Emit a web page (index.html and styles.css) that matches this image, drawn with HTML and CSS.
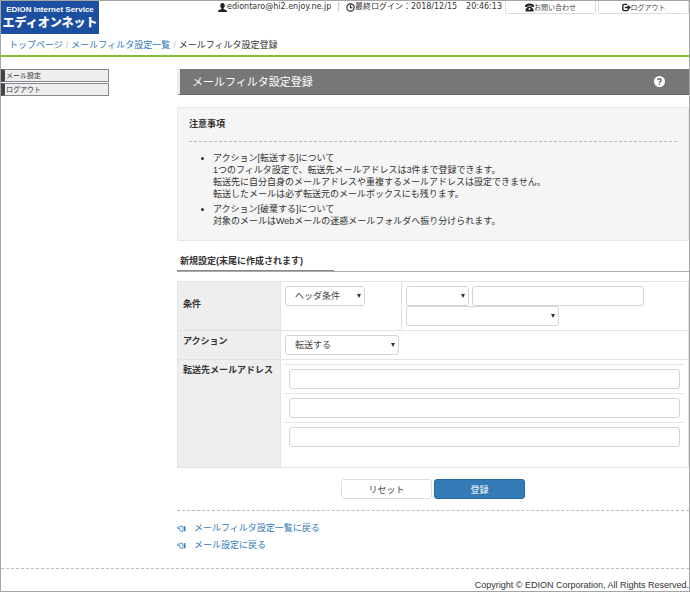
FILE: index.html
```
<!DOCTYPE html>
<html lang="ja">

<head>
    <meta charset="UTF-8">
    <meta name="viewport" content="width=device-width, initial-scale=1.0">
    <title>メールフィルタ設定登録</title>
    <link rel="stylesheet" href="styles.css">
</head>

<body>
    <header class="header">
        <a href="#" class="logo">
            <span class="logo-sub">EDION Internet Service</span>
            <span class="logo-main">エディオンネット</span>
        </a>
        <div class="user-info">
            <svg class="icon" viewBox="0 0 16 16"><path d="M8 0C5.400 0 4 1.800 4 4.500c0 2 .8 3.700 2 4.600v1.400C3.500 11.500 0 12.500 0 14v2h16v-2c0-1.500-3.500-2.500-6-3.500V9.100c1.200-.9 2-2.600 2-4.600C12 1.800 10.600 0 8 0z"/></svg>
            <span>ediontaro@hi2.enjoy.ne.jp</span>
            <span class="bar">|</span>
            <svg class="icon" viewBox="0 0 16 16"><circle cx="8" cy="8" r="6.500" fill="none" stroke="#222" stroke-width="2"/><path d="M8 3.500V8.500H11.500" fill="none" stroke="#222" stroke-width="2"/></svg>
            <span>最終ログイン：2018/12/15</span>
            <span class="time">20:46:13</span>
        </div>
        <div class="top-buttons">
            <button type="button" class="btn-top">
                <svg class="icon" viewBox="0 0 16 16"><path d="M0 5.500C0 3 3 1 8 1s8 2 8 4.500V7h-4.500V4.800h-7V7H0z"/><path d="M5 6h6l1 2 3 3v4H1v-4l3-3z"/><circle cx="8" cy="10.500" r="1.800" fill="#fff"/></svg>お問い合わせ
            </button>
            <button type="button" class="btn-top">
                <svg class="icon" viewBox="0 0 16 16"><path d="M9 2.500H3.500Q1.500 2.500 1.500 4.500v7q0 2 2 2H9q2 0 2-2" fill="none" stroke="#222" stroke-width="2.500"/><path d="M10 3l6 5-6 5v-3.500H5v-3h5z"/></svg>ログアウト
            </button>
        </div>
    </header>

    <nav class="breadcrumb">
        <a href="#">トップページ</a><span class="slash">/</span><a href="#">メールフィルタ設定一覧</a><span class="slash">/</span><span>メールフィルタ設定登録</span>
    </nav>

    <div class="container">
        <nav class="side-menu">
            <a href="#">メール設定</a>
            <a href="#">ログアウト</a>
        </nav>

        <main class="main">
            <div class="page-title">
                <h1>メールフィルタ設定登録</h1>
                <svg class="help" viewBox="0 0 16 16"><circle cx="8" cy="8" r="8" fill="#fff"/><path d="M5.500 6.300C5.500 3.200 10.500 3.200 10.500 6.200 10.500 8 8 7.800 8 9.800" fill="none" stroke="#666" stroke-width="2"/><path d="M7 11h2v2H7z" fill="#666"/></svg>
            </div>

            <section class="well">
                <h2>注意事項</h2>
                <ul>
                    <li>アクション[転送する]について<br>
                        1つのフィルタ設定で、転送先メールアドレスは3件まで登録できます。<br>
                        転送先に自分自身のメールアドレスや重複するメールアドレスは設定できません。<br>
                        転送したメールは必ず転送元のメールボックスにも残ります。</li>
                    <li>アクション[破棄する]について<br>
                        対象のメールはWebメールの迷惑メールフォルダへ振り分けられます。</li>
                </ul>
            </section>

            <h2 class="sub-title"><span>新規設定(末尾に作成されます)</span></h2>

            <form action="#" method="post">
                <table class="form-table">
                    <tr class="row-cond">
                        <th scope="row"><label for="condType">条件</label></th>
                        <td class="cond-type">
                            <span class="select w80"><select id="condType"><option>ヘッダ条件</option></select></span>
                        </td>
                        <td>
                            <div class="cond">
                                <span class="select w63"><select aria-label="ヘッダ"><option></option></select></span>
                                <input type="text" class="keyword" aria-label="キーワード">
                            </div>
                            <span class="select w153"><select aria-label="一致条件"><option></option></select></span>
                        </td>
                    </tr>
                    <tr>
                        <th scope="row"><label for="action">アクション</label></th>
                        <td colspan="2">
                            <span class="select w114"><select id="action"><option>転送する</option></select></span>
                        </td>
                    </tr>
                    <tr>
                        <th scope="row"><label for="mail1">転送先メールアドレス</label></th>
                        <td colspan="2" class="mails">
                            <div class="mail"><input type="text" id="mail1"></div>
                            <div class="mail"><input type="text" aria-label="転送先メールアドレス2"></div>
                            <div class="mail"><input type="text" aria-label="転送先メールアドレス3"></div>
                        </td>
                    </tr>
                </table>

                <div class="buttons">
                    <button type="reset" class="btn">リセット</button>
                    <button type="submit" class="btn btn-primary">登録</button>
                </div>
            </form>

            <div class="back-links">
                <a href="#"><svg class="hand" viewBox="0 0 18 14"><path d="M12 3.500H9.500L9 1.500 6.500 4H2Q.8 4 .8 5.500T2 7h3.500v2.500L7 12.500h5z" fill="none" stroke="#337ab7" stroke-width="1.600"/><path d="M14 2.500h3v10h-3z" fill="#337ab7"/></svg>メールフィルタ設定一覧に戻る</a>
                <a href="#"><svg class="hand" viewBox="0 0 18 14"><path d="M12 3.500H9.500L9 1.500 6.500 4H2Q.8 4 .8 5.500T2 7h3.500v2.500L7 12.500h5z" fill="none" stroke="#337ab7" stroke-width="1.600"/><path d="M14 2.500h3v10h-3z" fill="#337ab7"/></svg>メール設定に戻る</a>
            </div>
        </main>
    </div>

    <footer class="footer">Copyright © EDION Corporation, All Rights Reserved.</footer>
</body>

</html>
```
FILE: styles.css
```
* {
    box-sizing: border-box;
}

body {
    margin: 0;
    min-height: 100vh;
    border: 1px solid #a5a5a5;
    background-color: #fff;
    color: #333;
    font-family: "Liberation Sans", "Noto Sans CJK JP", sans-serif;
    font-size: 9px;
    line-height: 12px;
}

a {
    color: #337ab7;
    text-decoration: none;
}

h1,
h2,
ul {
    margin: 0;
    padding: 0;
}

button,
input,
select {
    font-family: inherit;
    font-size: 9px;
    color: #444;
}

/* header */
.header {
    display: flex;
    align-items: flex-start;
}

.logo {
    display: flex;
    flex-direction: column;
    align-items: center;
    width: 98px;
    height: 33px;
    padding-top: 3px;
    background-color: #1d4fa1;
    color: #fff;
    font-weight: bold;
    white-space: nowrap;
}

.logo-sub {
    font-size: 8px;
    line-height: 12px;
}

.logo-main {
    font-size: 12px;
    font-weight: 900;
    line-height: 14px;
}

.user-info {
    display: flex;
    align-items: center;
    margin-left: auto;
    font-family: "DejaVu Sans", "Noto Sans CJK JP", sans-serif;
    font-size: 8px;
    white-space: nowrap;
}

.icon {
    width: 9px;
    height: 9px;
    fill: #222;
}

.bar {
    margin: 0 6px;
    color: #aab;
}

.time {
    margin-left: 9px;
}

.top-buttons {
    display: flex;
    gap: 2px;
    margin-left: 3px;
}

.btn-top {
    display: flex;
    align-items: center;
    justify-content: center;
    width: 91px;
    height: 13px;
    padding: 0;
    border: 1px solid #ddd;
    border-top: none;
    border-radius: 0 0 2px 2px;
    background-color: #fff;
    font-size: 7px;
}

.breadcrumb {
    padding: 5px 8px 4px;
    border-bottom: 2px solid #82be37;
}

.slash {
    margin: 0 3px;
    color: #bbb;
}

/* layout */
.container {
    display: grid;
    grid-template-columns: 108px 1fr;
    gap: 68px;
    margin-top: 12px;
}

.side-menu {
    display: flex;
    flex-direction: column;
    gap: 1px;
}

.side-menu a {
    height: 13px;
    padding-left: 1px;
    border: 1px solid #85858d;
    border-left: 4px solid #44444f;
    background-color: #eee;
    color: #333;
    font-size: 7px;
    line-height: 11px;
}

.page-title {
    display: flex;
    align-items: center;
    justify-content: space-between;
    height: 26px;
    padding: 0 24px 0 12px;
    border-left: 3px solid #eee;
    border-bottom: 1px solid #666;
    background-color: #777;
    background-clip: padding-box;
    color: #fff;
}

.page-title h1 {
    font-size: 11px;
    font-weight: normal;
}

.help {
    width: 11px;
    height: 11px;
}

.well {
    margin-top: 12px;
    padding: 10px 11px;
    border: 1px solid #e6e6e6;
    border-radius: 2px;
    background-color: #f5f5f5;
}

.well h2 {
    padding-bottom: 11px;
    border-bottom: 1px dashed #bbb;
    font-size: 9px;
}

.well ul {
    margin-top: 10px;
    padding-left: 24px;
}

.well li {
    margin-bottom: 3px;
}

.sub-title {
    margin-top: 14px;
    border-bottom: 1px solid #aaa;
    font-size: 9px;
}

.sub-title span {
    display: block;
    width: 157px;
    padding: 0 0 3px 3px;
    border-bottom: 1px solid #888;
    white-space: nowrap;
}

/* form */
.form-table {
    width: 100%;
    margin-top: 9px;
    border-collapse: collapse;
    border: 1px solid #e3e3e3;
}

.form-table th,
.form-table td {
    padding: 4px;
    border: 1px solid #e3e3e3;
    text-align: left;
    vertical-align: top;
}

.form-table th {
    width: 103px;
    padding: 4px 5px;
    border-right: none;
    background-color: #eee;
    white-space: nowrap;
}

.form-table .row-cond th {
    padding-top: 0;
    vertical-align: middle;
}

.form-table .cond-type {
    width: 121px;
}

.select {
    display: block;
    position: relative;
}

.select::after {
    content: "";
    position: absolute;
    top: 8px;
    right: 4px;
    width: 4px;
    height: 4px;
    background-color: #333;
    clip-path: polygon(0 0, 100% 0, 50% 100%);
    pointer-events: none;
}

.select select,
.form-table input {
    display: block;
    width: 100%;
    height: 20px;
    padding: 0 9px;
    border: 1px solid #d5d5d5;
    border-radius: 3px;
    background-color: #fff;
    appearance: none;
}

.w63 {
    width: 63px;
}

.w80 {
    width: 80px;
}

.w114 {
    width: 114px;
}

.w153 {
    width: 153px;
}

.cond {
    display: flex;
    gap: 3px;
}

.form-table .keyword {
    width: 172px;
}

.form-table .mails {
    padding-bottom: 16px;
}

.mail {
    padding: 4px;
    border-top: 1px solid #e3e3e3;
}

.buttons {
    display: flex;
    justify-content: center;
    gap: 2px;
    margin-top: 11px;
    padding-bottom: 11px;
    border-bottom: 1px dashed #bbb;
}

.btn {
    width: 91px;
    height: 20px;
    padding: 0;
    border: 1px solid #ddd;
    border-radius: 3px;
    background-color: #fff;
}

.btn-primary {
    border-color: #2869a4;
    background-color: #337ab7;
    color: #fff;
}

.back-links {
    display: flex;
    flex-direction: column;
    gap: 5px;
    margin-top: 11px;
}

.back-links a {
    display: flex;
    align-items: center;
}

.hand {
    width: 9px;
    height: 7px;
    margin-right: 8px;
}

.footer {
    margin-top: 17px;
    padding-top: 11px;
    border-top: 1px dashed #bbb;
    line-height: 11px;
    text-align: right;
}
```
